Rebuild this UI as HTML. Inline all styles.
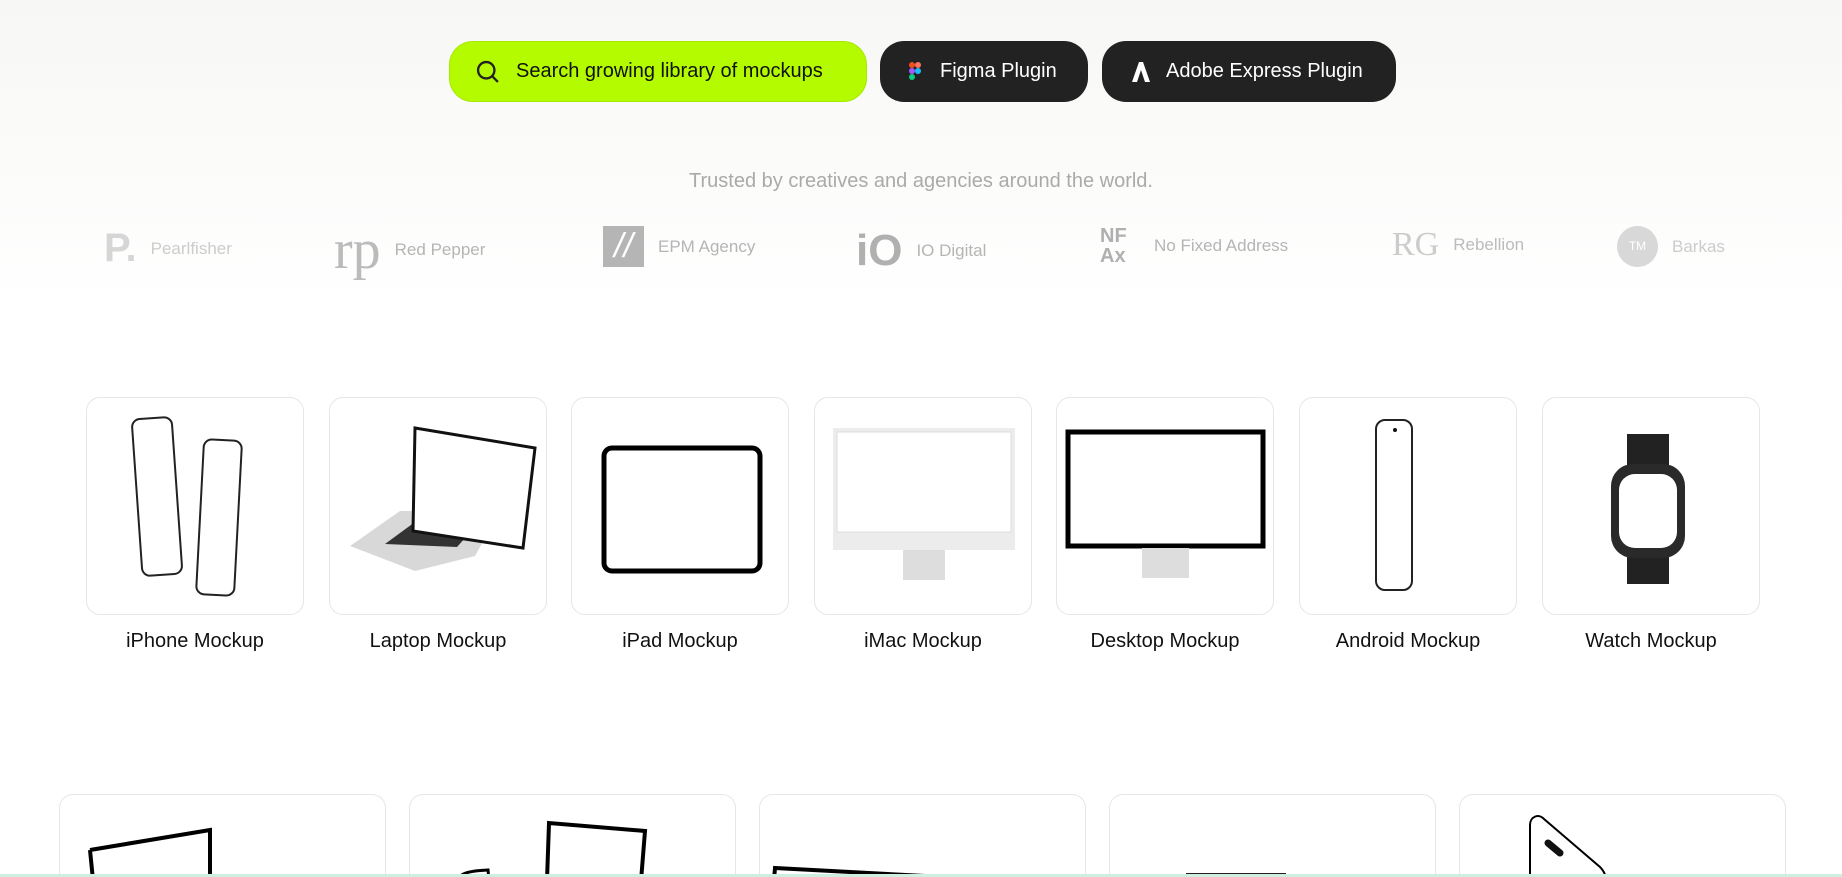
<!DOCTYPE html>
<html><head><meta charset="utf-8"><style>
*{margin:0;padding:0;box-sizing:border-box}
html,body{width:1842px;height:877px;overflow:hidden}
#w{position:relative;width:1842px;height:877px;overflow:hidden;font-family:"Liberation Sans",sans-serif;background:linear-gradient(#f7f7f5 0,#fcfcfb 200px,#fff 300px)}
.btn{position:absolute;top:41px;height:61px;border-radius:24px;display:flex;align-items:center;font-size:20px}
.s{left:449px;width:418px;background:#b4fb00;border:1px solid #a6e800;color:#111;padding-left:24px}
.d{background:#222;color:#fff;padding-left:28px}
.trust{position:absolute;top:170px;width:100%;text-align:center;color:#aaa;font-size:20px}
.logo{position:absolute;top:226px;display:flex;align-items:center;color:#b5b5b5;font-size:17px;gap:14px}
.card{position:absolute;border:1px solid #e6e6e6;border-radius:14px;background:#fff;overflow:hidden}
.r1{top:397px;width:218px;height:218px}
.lab{position:absolute;top:630px;width:218px;text-align:center;font-size:20px;color:#111}
.r2{top:794px;width:327px;height:83px;border-bottom:none;border-radius:14px 14px 0 0}
.bar{position:absolute;left:0;right:0;top:874px;height:3px;background:#cfeee2}
</style></head><body><div id="w">
<div class="btn s"><svg width="28" height="28" viewBox="0 0 24 24" fill="none" stroke="#222" stroke-width="2"><circle cx="10.5" cy="10.5" r="7"/><path d="M15.5 15.5l5 5"/></svg><span style="margin-left:14px">Search growing library of mockups</span></div>
<div class="btn d" style="left:880px;width:208px"><svg width="14" height="20" viewBox="0 0 14 20"><rect x="1" y="0" width="6" height="6" rx="3" fill="#f24e1e"/><rect x="7" y="0" width="6" height="6" rx="3" fill="#ff7262"/><rect x="1" y="6" width="6" height="6" rx="3" fill="#a259ff"/><circle cx="10" cy="9" r="3" fill="#1abcfe"/><rect x="1" y="12" width="6" height="6" rx="3" fill="#0acf83"/></svg><span style="margin-left:18px">Figma Plugin</span></div>
<div class="btn d" style="left:1102px;width:294px;padding-left:30px"><svg width="18" height="20" viewBox="0 0 18 20"><path d="M7 0h4l7 20h-5l-4-12-4 12H0z" fill="#fff"/></svg><span style="margin-left:16px">Adobe Express Plugin</span></div>
<div class="trust">Trusted by creatives and agencies around the world.</div>
<div class="logo" style="left:104px;color:#ccc"><b style="font-size:40px;color:#d6d6d6">P.</b>Pearlfisher</div>
<div class="logo" style="left:334px;top:218px"><span style="font-family:'Liberation Serif',serif;font-size:56px;color:#bbb">rp</span>Red Pepper</div>
<div class="logo" style="left:603px"><div style="width:41px;height:41px;background:#b5b5b5;color:#fff;font-size:34px;font-style:italic;text-align:center;line-height:41px">//</div>EPM Agency</div>
<div class="logo" style="left:856px"><b style="font-size:44px;color:#b0b0b0">iO</b>IO Digital</div>
<div class="logo" style="left:1100px"><b style="font-size:20px;line-height:20px;color:#b0b0b0;width:40px">NF<br>Ax</b>No Fixed Address</div>
<div class="logo" style="left:1392px;color:#bbb"><span style="font-family:'Liberation Serif',serif;font-size:34px;color:#ccc">RG</span>Rebellion</div>
<div class="logo" style="left:1617px;color:#ccc"><div style="width:41px;height:41px;border-radius:50%;background:#d8d8d8;color:#fff;font-size:12px;text-align:center;line-height:41px">TM</div>Barkas</div>

<div class="card r1" style="left:86px"><svg width="218" height="218"><g fill="#fff" stroke="#222" stroke-width="2"><rect x="50" y="20" width="40" height="157" rx="8" transform="rotate(-4 70 98)"/><rect x="113" y="42" width="38" height="155" rx="8" transform="rotate(3 132 120)"/></g></svg></div>
<div class="card r1" style="left:329px"><svg width="218" height="218"><path d="M20 148l50-35h100l-25 45-60 15z" fill="#d8d8d8"/><path d="M55 146l30-22 60 5-18 20z" fill="#333"/><path d="M85 30l120 20-12 100-110-17z" fill="#fff" stroke="#111" stroke-width="3"/></svg></div>
<div class="card r1" style="left:571px"><svg width="218" height="218"><rect x="32" y="50" width="156" height="123" rx="8" fill="#fff" stroke="#000" stroke-width="5"/></svg></div>
<div class="card r1" style="left:814px"><svg width="218" height="218"><rect x="18" y="30" width="182" height="122" fill="#ececec"/><rect x="22" y="34" width="174" height="100" fill="#fff" stroke="#ddd"/><rect x="88" y="152" width="42" height="30" fill="#ddd"/></svg></div>
<div class="card r1" style="left:1056px"><svg width="218" height="218"><rect x="11" y="34" width="195" height="114" fill="#fff" stroke="#000" stroke-width="5"/><rect x="85" y="150" width="47" height="30" fill="#ddd"/></svg></div>
<div class="card r1" style="left:1299px"><svg width="218" height="218"><rect x="76" y="22" width="36" height="170" rx="9" fill="#fff" stroke="#222" stroke-width="2"/><circle cx="95" cy="32" r="2" fill="#111"/></svg></div>
<div class="card r1" style="left:1542px"><svg width="218" height="218"><rect x="84" y="36" width="42" height="150" fill="#222"/><rect x="68" y="66" width="74" height="94" rx="22" fill="#2a2a2a"/><rect x="76" y="76" width="58" height="74" rx="16" fill="#fff"/></svg></div>
<div class="lab" style="left:86px">iPhone Mockup</div>
<div class="lab" style="left:329px">Laptop Mockup</div>
<div class="lab" style="left:571px">iPad Mockup</div>
<div class="lab" style="left:814px">iMac Mockup</div>
<div class="lab" style="left:1056px">Desktop Mockup</div>
<div class="lab" style="left:1299px">Android Mockup</div>
<div class="lab" style="left:1542px">Watch Mockup</div>

<div class="card r2" style="left:59px"><svg width="327" height="83"><path d="M30 55l120-20 0 50M30 55l3 30" fill="none" stroke="#000" stroke-width="4"/></svg></div>
<div class="card r2" style="left:409px"><svg width="327" height="83"><path d="M137 85l2-57 96 8-4 50" fill="none" stroke="#000" stroke-width="4"/><path d="M48 85c2-6 8-9 30-10l1 10" fill="none" stroke="#000" stroke-width="3"/></svg></div>
<div class="card r2" style="left:759px"><svg width="327" height="83"><path d="M14 85l1-12 150 8" fill="none" stroke="#000" stroke-width="4"/></svg></div>
<div class="card r2" style="left:1109px"><svg width="327" height="83"><rect x="76" y="78" width="100" height="6" fill="#222"/></svg></div>
<div class="card r2" style="left:1459px"><svg width="327" height="83"><path d="M70 85V30c0-8 8-12 14-6l56 48c4 4 6 8 6 14" fill="#fff" stroke="#000" stroke-width="2"/><path d="M88 48l12 10" stroke="#111" stroke-width="7" stroke-linecap="round"/></svg></div>
<div class="bar"></div>
</div></body></html>
